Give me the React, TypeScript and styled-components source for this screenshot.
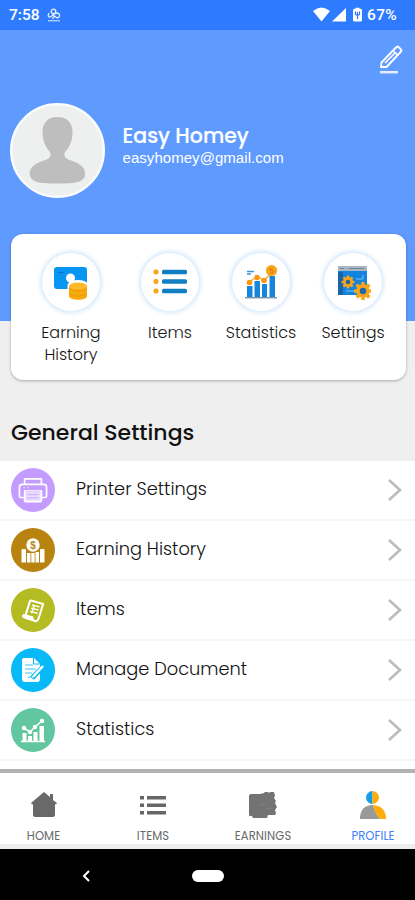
import React from "react";
import styled, { createGlobalStyle } from "styled-components";

const Global = createGlobalStyle`
  * { box-sizing: border-box; }
  body { margin: 0; background: #efefef; }
`;

const sans = `Poppins, Inter, sans-serif`;

const Screen = styled.div`
  width: 415px;
  height: 900px;
  overflow: hidden;
  display: flex;
  flex-direction: column;
  background: #efefef;
  font-family: ${sans};
`;

const StatusBar = styled.div`
  height: 30px;
  flex: none;
  display: flex;
  align-items: center;
  padding: 0 18px 0 9px;
  background: #2f7bff;
  color: #fff;
  font: 500 15.5px/30px Roboto, sans-serif;
`;

const StatusIcons = styled.div`
  margin-left: auto;
  display: flex;
  align-items: center;
  letter-spacing: 0.3px;
  svg { margin-right: 4px; }
`;

const Clock = styled.span`
  width: 38px;
`;

const Header = styled.header`
  height: 291px;
  flex: none;
  background: #5f9aff;
  color: #fff;
`;

const EditRow = styled.div`
  height: 73px;
  display: flex;
  justify-content: flex-end;
  padding: 14px 11px 0 0;
`;

const User = styled.div`
  display: flex;
  padding-left: 10px;
`;

const UserText = styled.div`
  padding: 19px 0 0 17.5px;
`;

const Name = styled.h1`
  margin: 0;
  font-size: 20.5px;
  font-weight: 500;
  line-height: 27px;
  -webkit-text-stroke: 0.2px #fff;
`;

const Email = styled.div`
  font: 15px/18px "Liberation Sans", sans-serif;
  letter-spacing: 0.05px;
`;

const Card = styled.section`
  flex: none;
  height: 146px;
  margin: -87px 9px 1px 11px;
  border-radius: 12px;
  background: #fff;
  box-shadow: 0 1px 3px rgba(0, 0, 0, 0.3);
  display: grid;
  grid-template-columns: 120px 78px 104px 80px;
`;

const Shortcut = styled.div`
  display: flex;
  flex-direction: column;
  align-items: center;
  padding-top: 19px;
`;

const Ring = styled.div`
  width: 58px;
  height: 58px;
  border-radius: 50%;
  box-shadow: 0 0 4px 2px #d5e9fb;
  display: flex;
  align-items: center;
  justify-content: center;
`;

const ShortcutLabel = styled.div`
  margin-top: 11px;
  text-align: center;
  font-size: 16px;
  line-height: 22px;
  font-weight: 300;
  color: #161616;
  white-space: pre-line;
`;

const SectionTitle = styled.h2`
  flex: none;
  height: 80px;
  margin: 0;
  padding: 37px 0 0 11px;
  font-size: 22px;
  line-height: 30px;
  font-weight: 500;
  color: #111;
`;

const List = styled.div`
  flex: 1;
  background: #fff;
  min-height: 0;
`;

const Row = styled.div`
  height: 60px;
  display: flex;
  align-items: center;
  padding: 0 12px 0 10.5px;
  border-bottom: 2px solid #f6f6f6;
`;

const Badge = styled.div<{ $color: string }>`
  width: 44px;
  height: 44px;
  border-radius: 50%;
  background: ${(p) => p.$color};
  display: flex;
  align-items: center;
  justify-content: center;
`;

const RowLabel = styled.div`
  flex: 1;
  padding: 0 0 3px 21.5px;
  font-size: 17.8px;
  line-height: 26px;
  font-weight: 300;
  color: #111;
`;

const TabBar = styled.nav`
  flex: none;
  height: 80px;
  border-top: 4px solid #b2b2b2;
  border-bottom: 5px solid #eee;
  background: #fff;
  display: grid;
  grid-template-columns: 87px 132px 88px 132px;
`;

const Tab = styled.div<{ $active?: boolean }>`
  display: flex;
  flex-direction: column;
  align-items: center;
  padding-top: 17px;
  font-size: 11.6px;
  line-height: 16px;
  letter-spacing: 0.1px;
  color: ${(p) => (p.$active ? "#4080f8" : "#686868")};
  svg { margin-bottom: 8px; }
`;

const SystemNav = styled.div`
  flex: none;
  height: 51px;
  background: #000;
  display: grid;
  grid-template-columns: 172px 72px 171px;
  place-items: center;
  padding-top: 2px;
`;

const HomePill = styled.div`
  width: 32px;
  height: 12px;
  border-radius: 6px;
  background: #fff;
`;

const Gear = ({ x, y, r }: { x: number; y: number; r: number }) => (
  <g transform={`translate(${x} ${y})`} fill="#f9a51a">
    {[0, 45, 90, 135].map((a) => (
      <rect key={a} x={-r * 0.2} y={-r} width={r * 0.4} height={r * 2} rx={r * 0.08} transform={`rotate(${a})`} />
    ))}
    <circle r={r * 0.74} />
    <circle r={r * 0.36} fill="#2167a5" />
  </g>
);

const EarningIcon = () => (
  <svg width="36" height="36" viewBox="0 0 36 36">
    <rect x="1" y="3" width="33" height="22" rx="3" fill="#0795f2" />
    <path d="M5 8.500h6" stroke="#0876c8" />
    <circle cx="17.500" cy="14" r="4.500" fill="#fff" />
    <path d="M16 22c0-6 18-6 18 0v10c0 5-18 5-18 0z" fill="#fff" stroke="#fff" strokeWidth="3" />
    <path d="M16 22v10c0 5 18 5 18 0V22z" fill="#f9aa0b" />
    <ellipse cx="25" cy="22" rx="9" ry="3.500" fill="#ffb92d" />
    <path d="M16 24c2 4 16 4 18 0M16 29c2 4 16 4 18 0" fill="none" stroke="#e99a08" />
  </svg>
);

const ItemsIcon = () => (
  <svg width="34" height="26" viewBox="0 0 34 26">
    {[3, 12.5, 22].map((y) => (
      <g key={y}>
        <rect x="0.5" y={y - 2.5} width="5" height="5" rx="2" fill="#f9a51a" />
        <rect x="9" y={y - 2.3} width="25" height="4.6" rx="1.5" fill="#107fc4" />
      </g>
    ))}
  </svg>
);

const StatsIcon = () => (
  <svg width="34" height="36" viewBox="0 0 34 36">
    <path d="M3 22h5.500v11H3zM10.500 17H16v16h-5.500zM18 20h5v13h-5zM25.500 12H31v21h-5.500z" fill="#1686dc" />
    <path d="M1 33.800h32" stroke="#416986" strokeWidth="1" />
    <path d="M5 18l8-5 7 3 7-6" fill="none" stroke="#f9a51a" strokeWidth="1.200" />
    <circle cx="5.500" cy="18.500" r="2.800" fill="#f9980f" />
    <circle cx="13" cy="13.500" r="2.800" fill="#f9980f" />
    <circle cx="20" cy="16.500" r="2.800" fill="#f9980f" />
    <circle cx="27.500" cy="6.500" r="5.600" fill="#f9a51a" />
    <path d="M29 4.500h-3v2h3v2.500h-3" fill="none" stroke="#db7908" />
    <path d="M3 7.500h7M3 10h4" stroke="#3298df" strokeWidth="1.300" />
  </svg>
);

const SettingsIcon = () => (
  <svg width="36" height="36" viewBox="0 0 36 36">
    <path d="M3 3h29v28H3z" fill="#1483dc" />
    <path d="M3 8h5v23H3z" fill="#1764a8" />
    <path d="M3 2h29v5H3z" fill="#a7b6c2" />
    <path d="M5 4.500h4M14 4.500h15" stroke="#718797" />
    <path d="M21 15h7v-4M11 27h8l3 2" fill="none" stroke="#78c1f7" />
    <Gear x={13} y={18} r={6.5} />
    <Gear x={28} y={27} r={9} />
  </svg>
);

const PrinterIcon = () => (
  <svg width="30" height="28" viewBox="0 0 32 30" fill="none" stroke="#fff" strokeWidth="1.800" strokeLinejoin="round">
    <path d="M7 9V3h18v6M7 23H3q-1.500 0-1.500-1.500V12q0-3 3-3h23q3 0 3 3v9.500q0 1.500-1.500 1.500H25" />
    <path d="M7 16h18v10q0 1.500-1.500 1.500h-15Q7 27.500 7 26z" fill="#e9dcff" />
    <path d="M8 16.500h16" stroke="#e3d0ff" />
    <path d="M10 20h12M10 23.500h12" stroke="#c9a5ff" strokeWidth="1" />
    <path d="M6 12.500h1M10 12.500h1" strokeWidth="1.500" />
  </svg>
);

const BooksIcon = () => (
  <svg width="24" height="28" viewBox="0 0 24 28">
    <path d="M.5 14q0-1 1-1H4q1 0 1 1v12.500H.5zM6 17h3.500v9.500H6zM10.300 17h3.400v9.500h-3.400zM14.500 16H18v10.500h-3.500zM19 14q0-1 1-1h2.500q1 0 1 1v12.500H19z" fill="#fff" />
    <circle cx="12" cy="9" r="6.700" fill="#fff" />
    <text x="12" y="12.700" fill="#b98414" textAnchor="middle" fontFamily="Liberation Sans" fontWeight="700" fontSize="10">$</text>
  </svg>
);

const ReceiptIcon = () => (
  <svg width="24" height="25" viewBox="0 0 26 26" fill="none" stroke="#fff" strokeWidth="2.200" strokeLinejoin="round">
    <path d="M10 2l14 4-5 16q-2 4-5 2L5 21M10 2L5 18" />
    <path d="M2 18q1 3 5 3l7 2M2 18l11 3" strokeWidth="3" />
    <path d="M12 7l8 2M11 10.500l8 2M10 14l8 2M14.500 7l-3 9" strokeWidth="1.500" />
  </svg>
);

const DocumentIcon = () => (
  <svg width="26" height="28" viewBox="0 0 26 28">
    <path d="M4 2h10l6 6v15q0 3-3 3H5q-3 0-3-3V4q0-2 2-2z" fill="#fff" />
    <path d="M13.500 2v6h6" fill="none" stroke="#08b9f6" />
    <path d="M5 9h8M5 13h11M5 17h7" stroke="#79d7fb" strokeWidth="1.400" />
    <path d="M12 22l12-12" stroke="#08b9f6" strokeWidth="5" />
    <path d="M12 22l11-12" stroke="#fff" strokeWidth="2.500" />
    <path d="M8 22q3-3 4 0h4" fill="none" stroke="#08b9f6" />
  </svg>
);

const dots = [[3, 11], [9, 15], [14, 10], [21, 4]];

const ChartIcon = () => (
  <svg width="24" height="26" viewBox="0 0 24 26">
    <path d="M1.500 16h4v8h-4zM7 19h4v5H7zM12.500 15h4v9h-4zM18.500 9H23v15h-4.500z" fill="#fff" />
    <path d="M0 24.500h24M3 11l6 4 5-5 7-6" fill="none" stroke="#fff" strokeWidth="1.600" />
    {dots.map(([x, y]) => <circle key={x} cx={x} cy={y} r="2.200" fill="#fff" />)}
  </svg>
);

const rows = [
  { label: "Printer Settings", color: "#c49cff", icon: <PrinterIcon /> },
  { label: "Earning History", color: "#b9830f", icon: <BooksIcon /> },
  { label: "Items", color: "#b5bb22", icon: <ReceiptIcon /> },
  { label: "Manage Document", color: "#08b9f8", icon: <DocumentIcon /> },
  { label: "Statistics", color: "#62c6a1", icon: <ChartIcon /> },
];

export default function App() {
  return (
    <Screen>
      <Global />
      <StatusBar>
        <Clock>7:58</Clock>
        <svg width="14" height="14" viewBox="0 0 14 14" fill="none" stroke="#e4eeff" strokeWidth="1.300">
          <circle cx="6.500" cy="3.500" r="2.300" />
          <path d="M2 5q-2 4 1 4 3-1 4-4m0 4q-1-4 3-4 4 1 2 4-2 2-4-1M5 10q1 1 3-2" />
          <path d="M1 12.800h12" strokeWidth="1" />
        </svg>
        <StatusIcons>
          <svg width="50" height="16" viewBox="0 0 50 16" fill="#fff">
            <path d="M0 4q8.500-7 17 0L8.500 14.500z" />
            <path d="M33 1v13.500H19z" />
            <path d="M42.500 1.800V.8h4v1h1q1.500 0 1.500 1.500v9.700q0 1.500-1.500 1.500h-6q-1.500 0-1.500-1.500V3.300q0-1.500 1.500-1.500z" />
            <path d="M42.500 4.500v3l2 1 2-1v-3M44.500 5v7" fill="none" stroke="#2f7bff" strokeWidth="1.200" />
          </svg>
          67%
        </StatusIcons>
      </StatusBar>
      <Header>
        <EditRow>
          <svg width="26" height="31" viewBox="0 0 26 31" fill="none" stroke="#fff" strokeWidth="1.900" strokeLinejoin="round">
            <path d="M3.500 18.500L18.500 3q1-1 2 0l2.500 2.500q1 1 0 2L8.500 23H3z" />
            <path d="M7 19L17.500 8.500M15 6.500l5 5" strokeWidth="1.600" />
            <path d="M2 28.200h18" strokeWidth="2.500" stroke="#e2edff" />
          </svg>
        </EditRow>
        <User>
          <svg width="95" height="95" viewBox="0 0 95 95">
            <circle cx="47.500" cy="47.500" r="46.300" fill="#eeefef" stroke="#fafcff" strokeWidth="2.400" />
            <path d="M47.500 14c-10 0-15.500 6-15 17 .5 8 4 14 7.500 18 2 5-1 7-7.500 9-9 3-14 8-12.500 14 1 7 8 8.500 27.500 8.500S74 79 75 72c.5-7-4-11-12.500-14-6.500-2-9.500-4-7.500-9 4-4 7-10 7.500-18 .5-11-5-17-15-17z" fill="#bebebe" />
          </svg>
          <UserText>
            <Name>Easy Homey</Name>
            <Email>easyhomey@gmail.com</Email>
          </UserText>
        </User>
      </Header>
      <Card>
        <Shortcut><Ring><EarningIcon /></Ring><ShortcutLabel>{"Earning\nHistory"}</ShortcutLabel></Shortcut>
        <Shortcut><Ring><ItemsIcon /></Ring><ShortcutLabel>Items</ShortcutLabel></Shortcut>
        <Shortcut><Ring><StatsIcon /></Ring><ShortcutLabel>Statistics</ShortcutLabel></Shortcut>
        <Shortcut><Ring><SettingsIcon /></Ring><ShortcutLabel>Settings</ShortcutLabel></Shortcut>
      </Card>
      <SectionTitle>General Settings</SectionTitle>
      <List>
        {rows.map((r) => (
          <Row key={r.label}>
            <Badge $color={r.color}>{r.icon}</Badge>
            <RowLabel>{r.label}</RowLabel>
            <svg width="16" height="24" viewBox="0 0 16 24" fill="none" stroke="#bcbcbc" strokeWidth="2.600">
              <path d="M2 2l11 10L2 22" />
            </svg>
          </Row>
        ))}
      </List>
      <TabBar>
        <Tab>
          <svg width="26" height="30" viewBox="0 0 26 30" fill="#696969">
            <path d="M13 2l6 5V4h3v6l4 3-1 1.500-1-.5v11q0 2-2 2H4q-2 0-2-2V14l-1 .5L0 13z" />
          </svg>
          HOME
        </Tab>
        <Tab>
          <svg width="26" height="30" viewBox="0 0 26 30" fill="#666">
            <path d="M0 6h4v3.500H0zM7 6h19v3.500H7zM0 13.500h4V17H0zM7 13.500h19V17H7zM0 21h4v3.500H0zM7 21h19v3.500H7z" />
          </svg>
          ITEMS
        </Tab>
        <Tab>
          <svg width="30" height="30" viewBox="0 0 30 30">
            <path d="M3 4h9l4-1 1-1h3l1 1 1-1h4l1 4-1 2 2 3-1 2 2 4-2 3 1 3-1 2h-7l-1 3H5l-1-2H2q-1 0-1-1V6q0-2 2-2z" fill="#737373" />
            <path d="M11 15l7-1M17 19l8-1" stroke="#858585" strokeWidth=".7" />
          </svg>
          EARNINGS
        </Tab>
        <Tab $active>
          <svg width="28" height="30" viewBox="0 0 28 30">
            <path d="M13.500 1a6.500 6.500 0 000 13z" fill="#169ce9" />
            <path d="M13.500 1a6.500 6.500 0 010 13z" fill="#ffac0b" />
            <path d="M1 29Q1 15 14 15q2 8 7 14z" fill="#999" />
            <path d="M14 15Q27 16 27 29h-6q-5-5-7-14z" fill="#ffac0b" />
          </svg>
          PROFILE
        </Tab>
      </TabBar>
      <SystemNav>
        <svg width="10" height="14" viewBox="0 0 10 14" fill="none" stroke="#fff" strokeWidth="2"><path d="M8 2L3 7l5 5" /></svg>
        <HomePill />
      </SystemNav>
    </Screen>
  );
}
